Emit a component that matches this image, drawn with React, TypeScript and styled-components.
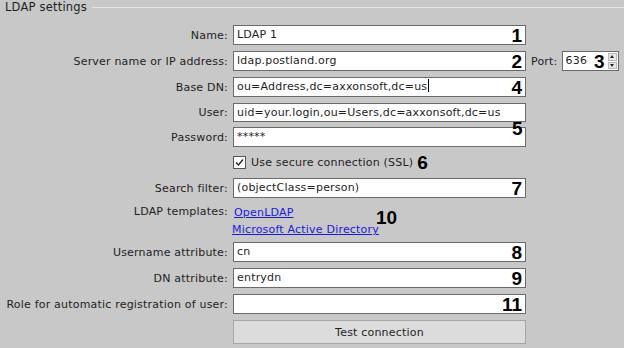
import React from 'react'
import styled, { createGlobalStyle } from 'styled-components'

const GlobalStyle = createGlobalStyle`
    html, body {
        margin: 0;
        padding: 0;
        background: #c8c8c8;
    }
`

const Page = styled.div`
    width: 624px;
    height: 348px;
    background: #c8c8c8;
    font-family: 'DejaVu Sans', Tahoma, sans-serif;
    font-size: 11px;
    letter-spacing: 0.2px;
    color: #1e1e1e;
    overflow: hidden;
`

const Legend = styled.div`
    display: flex;
    align-items: center;
    height: 14px;
    padding-left: 5px;
    font-size: 11.5px;

    &::after {
        content: '';
        flex: 1;
        height: 1px;
        margin-left: 5px;
        background: #e4e4e4;
    }
`

const Form = styled.div`
    display: flex;
    flex-direction: column;
    gap: 6px;
    margin-top: 11px;
`

const Row = styled.div<{ $h?: number; $top?: boolean }>`
    display: grid;
    grid-template-columns: 228px 293px auto;
    column-gap: 5px;
    align-items: ${p => (p.$top ? 'start' : 'center')};
    height: ${p => p.$h ?? 20}px;
`

const Label = styled.span`
    text-align: right;
    white-space: nowrap;
`

const Field = styled.div`
    position: relative;
    box-sizing: border-box;
    height: 20px;
    padding: 0 3px;
    border: 1px solid #6a6a6a;
    background: #fff;
    line-height: 18px;
    white-space: nowrap;
`

const Caret = styled.span`
    display: inline-block;
    width: 1px;
    height: 13px;
    margin-left: 1px;
    vertical-align: -2px;
    background: #000;
`

const Marker = styled.span`
    position: absolute;
    right: 3px;
    top: 50%;
    transform: translateY(-50%);
    font-family: 'Liberation Sans', Arial, sans-serif;
    font-weight: bold;
    font-size: 19px;
    letter-spacing: 0;
    line-height: 1;
    color: #000;
`

const InlineMarker = styled.span`
    margin-left: 4px;
    font-family: 'Liberation Sans', Arial, sans-serif;
    font-weight: bold;
    font-size: 19px;
    letter-spacing: 0;
    line-height: 1;
    color: #000;
`

const Pair = styled.div`
    position: relative;
    display: flex;
    flex-direction: column;
    gap: 5px;
`

const PairMarker = styled(Marker)`
    left: 512px;
    right: auto;
    top: 25px;
`

const PortGroup = styled.div`
    display: flex;
    align-items: center;
    gap: 4px;
`

const PortBox = styled(Field)`
    width: 57px;
    padding-right: 12px;
`

const Spin = styled.div`
    position: absolute;
    right: 1px;
    top: 1px;
    bottom: 1px;
    width: 9px;
    display: flex;
    flex-direction: column;
    gap: 1px;
    background: #fff;
`

const SpinHalf = styled.div<{ $down?: boolean }>`
    flex: 1;
    display: flex;
    align-items: center;
    justify-content: center;
    background: #e8e8e8;
    border: 1px solid #b8b8b8;

    &::before {
        content: '';
        border-left: 2px solid transparent;
        border-right: 2px solid transparent;
        ${p => (p.$down ? 'border-top: 3px solid #222;' : 'border-bottom: 3px solid #222;')}
    }
`

const CheckLine = styled.div`
    display: flex;
    align-items: center;
`

const Box = styled.span`
    box-sizing: border-box;
    width: 13px;
    height: 13px;
    margin-right: 5px;
    border: 1px solid #555;
    background: #fff;
    display: flex;
    align-items: center;
    justify-content: center;
`

const Links = styled.div`
    display: flex;
    flex-direction: column;
    gap: 2px;
    padding-top: 1px;
`

const LinkLine = styled.div`
    display: flex;
    align-items: flex-start;
`

const Link = styled.a`
    color: #1a1adc;
    text-decoration: underline;
    line-height: 15px;
`

const Button = styled.button`
    grid-column: 2;
    height: 24px;
    border: 1px solid #a6a6a6;
    background: #dcdcdc;
    font-family: inherit;
    font-size: 11px;
    letter-spacing: 0.2px;
    color: #1e1e1e;
    padding: 0;
`

const App = function (): JSX.Element {
    return (
        <Page>
            <GlobalStyle />
            <Legend>LDAP settings</Legend>
            <Form>
                <Row>
                    <Label>Name:</Label>
                    <Field>
                        LDAP 1<Marker>1</Marker>
                    </Field>
                </Row>
                <Row>
                    <Label>Server name or IP address:</Label>
                    <Field>
                        ldap.postland.org<Marker>2</Marker>
                    </Field>
                    <PortGroup>
                        <span>Port:</span>
                        <PortBox>
                            636
                            <Marker style={{ right: 13 }}>3</Marker>
                            <Spin>
                                <SpinHalf />
                                <SpinHalf $down />
                            </Spin>
                        </PortBox>
                    </PortGroup>
                </Row>
                <Row>
                    <Label>Base DN:</Label>
                    <Field>
                        ou=Address,dc=axxonsoft,dc=us
                        <Caret />
                        <Marker>4</Marker>
                    </Field>
                </Row>
                <Pair>
                    <Row $h={19}>
                        <Label>User:</Label>
                        <Field style={{ height: 19 }}>uid=your.login,ou=Users,dc=axxonsoft,dc=us</Field>
                    </Row>
                    <Row>
                        <Label>Password:</Label>
                        <Field>*****</Field>
                    </Row>
                    <PairMarker>5</PairMarker>
                </Pair>
                <Row $h={19}>
                    <span />
                    <CheckLine>
                        <Box>
                            <svg width="9" height="9" viewBox="0 0 9 9">
                                <path d="M1 4.5 L3.5 7 L8 1.5" fill="none" stroke="#222" strokeWidth="1.4" />
                            </svg>
                        </Box>
                        Use secure connection (SSL)
                        <InlineMarker>6</InlineMarker>
                    </CheckLine>
                </Row>
                <Row>
                    <Label>Search filter:</Label>
                    <Field>
                        (objectClass=person)<Marker>7</Marker>
                    </Field>
                </Row>
                <Row $h={32} $top>
                    <Label style={{ paddingTop: 1 }}>LDAP templates:</Label>
                    <Links>
                        <LinkLine>
                            <Link href="#" style={{ marginLeft: 1 }}>OpenLDAP</Link>
                        </LinkLine>
                        <LinkLine>
                            <Link href="#" style={{ marginLeft: -1 }}>Microsoft Active Directory</Link>
                            <InlineMarker style={{ marginTop: -14, marginLeft: -3 }}>10</InlineMarker>
                        </LinkLine>
                    </Links>
                </Row>
                <Row>
                    <Label>Username attribute:</Label>
                    <Field>
                        cn<Marker>8</Marker>
                    </Field>
                </Row>
                <Row>
                    <Label>DN attribute:</Label>
                    <Field>
                        entrydn<Marker>9</Marker>
                    </Field>
                </Row>
                <Row>
                    <Label>Role for automatic registration of user:</Label>
                    <Field>
                        <Marker>11</Marker>
                    </Field>
                </Row>
                <Row $h={24}>
                    <Button type="button">Test connection</Button>
                </Row>
            </Form>
        </Page>
    )
}

export default App
